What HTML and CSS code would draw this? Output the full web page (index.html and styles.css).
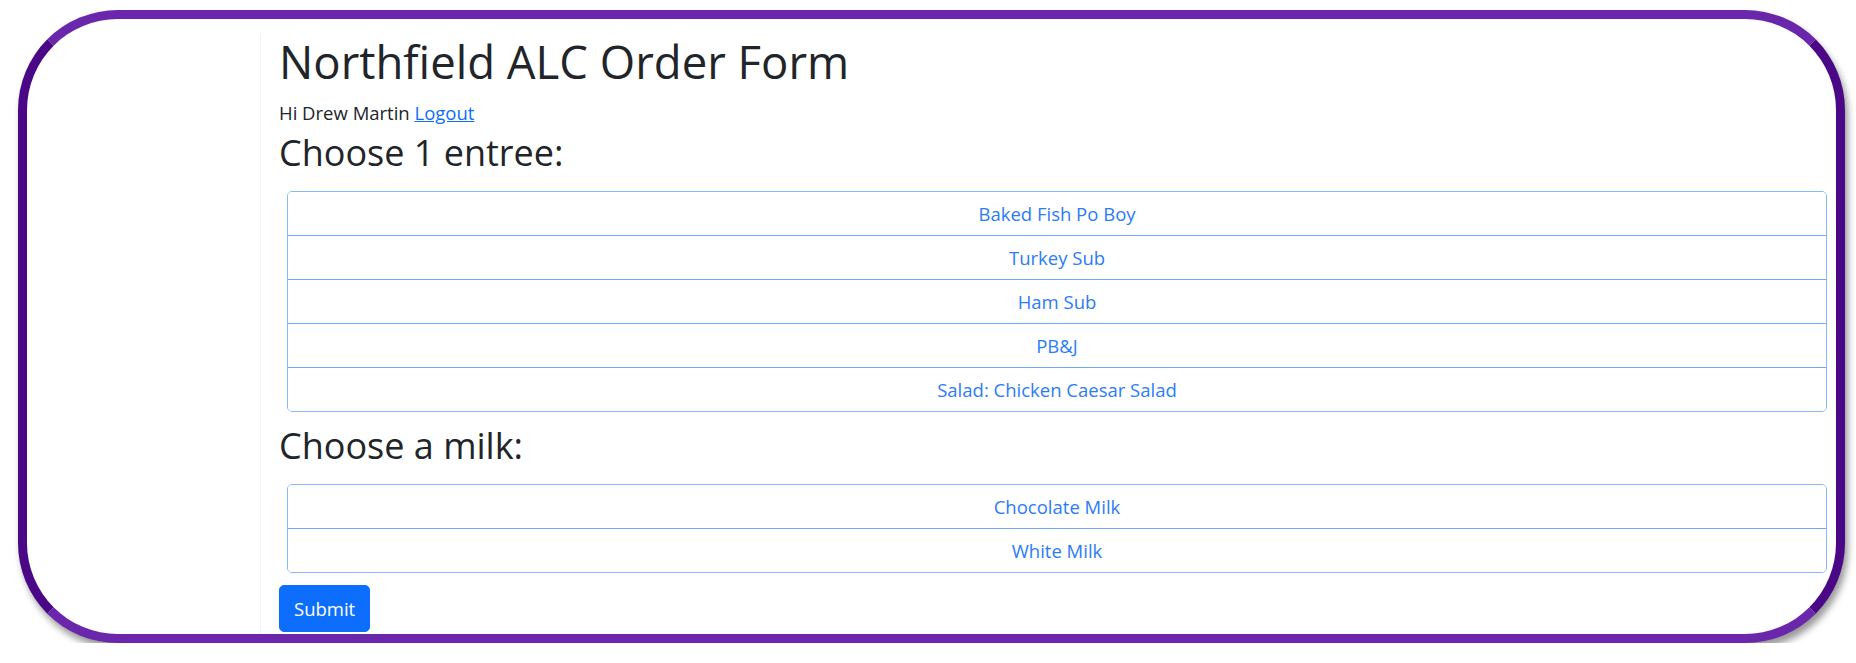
FILE: index.html
```html
<!DOCTYPE html>
<html lang="en">
<head>
  <meta charset="UTF-8" />
  <meta name="viewport" content="width=device-width, initial-scale=1" />
  <title>Northfield ALC Order Form</title>
  <link rel="stylesheet" href="styles.css">
</head>
<body>

  <div class="frame">
    <div class="page">
      <div class="side"></div>

      <main class="content">
        <h1>Northfield ALC Order Form</h1>
        <p class="greeting">Hi Drew Martin <a href="#">Logout</a></p>

        <form>
          <h2>Choose 1 entree:</h2>
          <div class="choices">
            <button type="button" class="choice">Baked Fish Po Boy</button>
            <button type="button" class="choice">Turkey Sub</button>
            <button type="button" class="choice">Ham Sub</button>
            <button type="button" class="choice">PB&amp;J</button>
            <button type="button" class="choice">Salad: Chicken Caesar Salad</button>
          </div>

          <h2>Choose a milk:</h2>
          <div class="choices">
            <button type="button" class="choice">Chocolate Milk</button>
            <button type="button" class="choice">White Milk</button>
          </div>

          <button type="submit" class="submit">Submit</button>
        </form>
      </main>
    </div>
  </div>

</body>
</html>
```

FILE: styles.css
```css
body {
  margin: 0;
  font-family: "Open Sans", "Noto Sans", sans-serif;
  background-color: white;
  color: #212529;
}

/* rounded purple picture frame around the screenshot */
.frame {
  box-sizing: border-box;
  width: 1827px;
  height: 633px;
  margin: 10px 0 0 18px;
  border: 9px solid;
  border-color: #6a27ac #4a0887 #6a27ac #4a0887;
  border-radius: 100px;
  overflow: hidden;
  background-color: white;
  box-shadow: 3px 6px 7px rgba(0, 0, 0, 0.4);
}

.page {
  display: flex;
  height: 100%;
  padding-top: 14px;
  box-sizing: border-box;
}

.side {
  width: 233px;
  flex-shrink: 0;
}

.content {
  flex: 1;
  border-left: 1px solid #f1f2f4;
  padding: 0 9px 0 18px;
}

h1 {
  margin: 1px 0 11px;
  font-size: 45.5px;
  font-weight: 400;
  line-height: 54px;
}

.greeting {
  margin: 0;
  font-size: 18.5px;
  line-height: 28px;
}

.greeting a {
  color: #0d6efd;
}

h2 {
  margin: 4px 0 17px;
  font-size: 36px;
  font-weight: 400;
  line-height: 43px;
}

.choices {
  display: flex;
  flex-direction: column;
  margin: 0 0 12px 8px;
  border: 1px solid #86b7fe;
  border-radius: 5px;
  overflow: hidden;
}

.choice {
  display: block;
  width: 100%;
  padding: 7.5px 16px;
  border: 0;
  border-top: 1px solid #6ea8fe;
  background-color: white;
  color: #2b7cf7;
  font-family: inherit;
  font-size: 18.5px;
  line-height: 28px;
  text-align: center;
  cursor: pointer;
}

.choice:first-child {
  border-top: 0;
}

.submit {
  padding: 8.5px 14px;
  border: 1px solid #0d6efd;
  border-radius: 5px;
  background-color: #0d6efd;
  color: white;
  font-family: inherit;
  font-size: 18.5px;
  line-height: 28px;
  cursor: pointer;
}
```
